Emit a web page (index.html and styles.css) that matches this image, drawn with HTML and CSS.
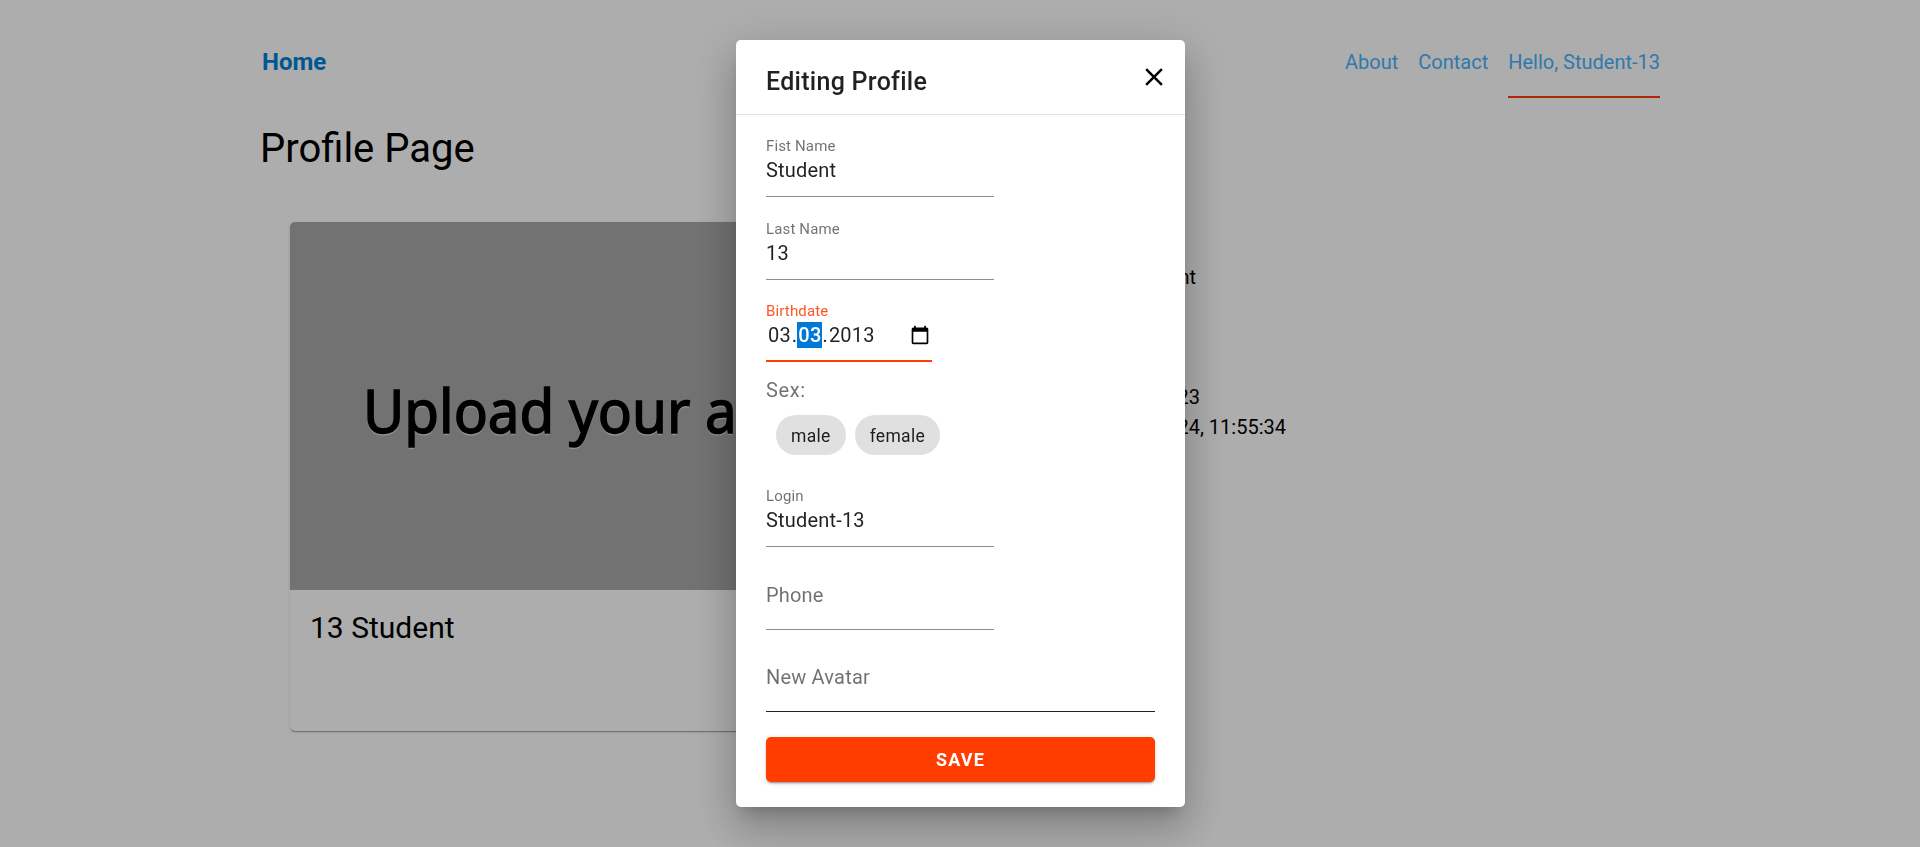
FILE: index.html
```html
<!DOCTYPE html>
<html lang="en">
<head>
<meta charset="utf-8">
<title>Profile Page</title>
<link rel="stylesheet" href="styles.css">
</head>
<body>
<div class="page">
  <header class="topbar">
    <a class="brand">Home</a>
    <nav class="nav">
      <a class="nav-link">About</a>
      <a class="nav-link">Contact</a>
      <a class="nav-link nav-active">Hello, Student-13</a>
    </nav>
  </header>
  <h1 class="page-title">Profile Page</h1>
  <main class="profile">
    <section class="card">
      <div class="card-media"><span class="media-text">Upload your a</span></div>
      <h2 class="card-name">13 Student</h2>
    </section>
    <section class="details">
      <p class="detail detail-name">Student</p>
      <p class="detail detail-date">2023</p>
      <p class="detail detail-time">2024, 11:55:34</p>
    </section>
  </main>
</div>
<div class="backdrop">
  <div class="dialog">
    <div class="dialog-head">
      <h2 class="dialog-title">Editing Profile</h2>
      <svg class="close" viewBox="0 0 24 24"><path d="M19 6.41L17.59 5 12 10.59 6.41 5 5 6.41 10.59 12 5 17.59 6.41 19 12 13.41 17.59 19 19 17.59 13.41 12z"/></svg>
    </div>
    <form class="form">
      <div class="field"><span class="label">Fist Name</span><span class="value">Student</span></div>
      <div class="field"><span class="label">Last Name</span><span class="value">13</span></div>
      <div class="field field-date">
        <span class="label">Birthdate</span>
        <div class="value date">
          <span class="date-text"><span class="part">03</span>.<span class="part selected">03</span>.<span class="part">2013</span></span>
          <svg class="calendar" viewBox="0 0 24 24"><path d="M20 3h-1V1h-2v2H7V1H5v2H4c-1.1 0-2 .9-2 2v16c0 1.1.9 2 2 2h16c1.1 0 2-.9 2-2V5c0-1.1-.9-2-2-2zm0 18H4V8h16v13z"/></svg>
        </div>
      </div>
      <div class="sex">Sex:</div>
      <div class="chips"><span class="chip">male</span><span class="chip">female</span></div>
      <div class="field"><span class="label">Login</span><span class="value">Student-13</span></div>
      <div class="field"><span class="placeholder">Phone</span></div>
      <div class="field field-wide"><span class="placeholder">New Avatar</span></div>
      <button class="save" type="button">SAVE</button>
    </form>
  </div>
</div>
</body>
</html>
```

FILE: styles.css
```css
* { box-sizing: border-box; }
body, h1, h2, p { margin: 0; }
body {
  height: 847px;
  overflow: hidden;
  background: #fff;
  color: #000;
  font-family: Roboto, sans-serif;
  font-size: 20px;
}
.page { width: 1400px; margin: 0 auto; }
.topbar {
  display: flex;
  justify-content: space-between;
  height: 98px;
  padding-top: 26px;
}
.brand {
  padding-left: 2px;
  font-size: 24px;
  font-weight: 700;
  line-height: 73px;
  color: #0081d8;
}
.nav { display: flex; gap: 20px; }
.nav-link { line-height: 72px; color: #46b3ff; height: 72px; }
.nav-active { border-bottom: 2px solid #ff3d00; }
.page-title {
  height: 100px;
  font-size: 40px;
  font-weight: 400;
  line-height: 102px;
}
.profile { display: flex; padding: 24px 30px; }
.card {
  width: 640px;
  height: 509px;
  border-radius: 5px;
  overflow: hidden;
  background: #fff;
  box-shadow: 0 2px 1px -1px rgba(0,0,0,.2), 0 1px 1px rgba(0,0,0,.14), 0 1px 3px rgba(0,0,0,.12);
}
.card-media {
  height: 368px;
  padding: 143px 0 0 73px;
  background: #a9a9a9;
}
.media-text {
  display: block;
  font: 400 60px/90px "Noto Sans", sans-serif;
  white-space: nowrap;
  -webkit-text-stroke: 1.5px #000;
  text-shadow: 0 2px 1px #ddd;
  transform: scaleX(.942);
  transform-origin: left;
}
.card-name {
  padding: 20px;
  font-size: 30px;
  font-weight: 400;
  line-height: 35px;
}
.details { padding: 40px 0 0 20px; line-height: 30px; }
.detail { text-align: right; }
.detail-name { width: 246px; }
.detail-date { width: 250px; margin-top: 90px; }
.detail-time { width: 336px; }
.backdrop {
  position: fixed;
  inset: 0;
  display: flex;
  align-items: center;
  justify-content: center;
  padding-left: 1px;
  background: rgba(0,0,0,.32);
}
.dialog {
  width: 449px;
  height: 767px;
  border-radius: 5px;
  background: #fff;
  color: rgba(0,0,0,.87);
  box-shadow: 0 11px 15px -7px rgba(0,0,0,.2), 0 24px 38px 3px rgba(0,0,0,.14), 0 9px 46px 8px rgba(0,0,0,.12);
}
.dialog-head {
  display: flex;
  justify-content: space-between;
  height: 75px;
  padding: 22px 16px 0 30px;
  border-bottom: 1px solid rgba(0,0,0,.12);
}
.dialog-title { font-size: 25px; font-weight: 500; line-height: 40px; letter-spacing: .28px; }
.close { width: 30px; height: 30px; fill: #000; }
.form { display: flex; flex-direction: column; padding: 12px 30px 0; }
.field {
  display: flex;
  flex-direction: column;
  width: 228px;
  height: 70px;
  margin-bottom: 13px;
  padding-top: 10px;
  border-bottom: 1px solid rgba(0,0,0,.44);
}
.label { height: 20px; font-size: 15px; line-height: 18px; letter-spacing: .14px; color: rgba(0,0,0,.56); }
.value { line-height: 26px; letter-spacing: .1875px; }
.placeholder { padding-top: 12px; line-height: 26px; letter-spacing: .1875px; color: rgba(0,0,0,.56); }
.field-date { width: 166px; margin: -1px 0 12px; border-bottom: 2px solid #ff3d00; }
.field-date .label { color: rgba(255,61,0,.87); }
.date { display: flex; justify-content: space-between; padding: 0 2px 0 1px; }
.date-text { display: flex; letter-spacing: .1875px; }
.part { padding: 0 1px; }
.selected { background: #0078d7; color: #fff; font-weight: 500; }
.calendar { width: 20px; height: 20px; margin-top: 3px; fill: #000; }
.sex { height: 30px; line-height: 32px; letter-spacing: .6px; color: rgba(0,0,0,.56); }
.chips { display: flex; gap: 9px; padding: 11px 0 22px 10px; }
.chip {
  height: 40px;
  padding: 0 15px;
  border-radius: 20px;
  background: #e0e0e0;
  font-size: 17.5px;
  line-height: 42px;
  letter-spacing: .3125px;
}
.field-wide { width: 389px; margin-top: -1px; margin-bottom: 25px; border-color: rgba(0,0,0,.87); }
.save {
  height: 45px;
  border: 0;
  border-radius: 5px;
  background: #ff3d00;
  color: #fff;
  font: 700 18px Roboto, sans-serif;
  letter-spacing: 1.1px;
  box-shadow: 0 3px 1px -2px rgba(0,0,0,.2), 0 2px 2px rgba(0,0,0,.14), 0 1px 5px rgba(0,0,0,.12);
}
```
